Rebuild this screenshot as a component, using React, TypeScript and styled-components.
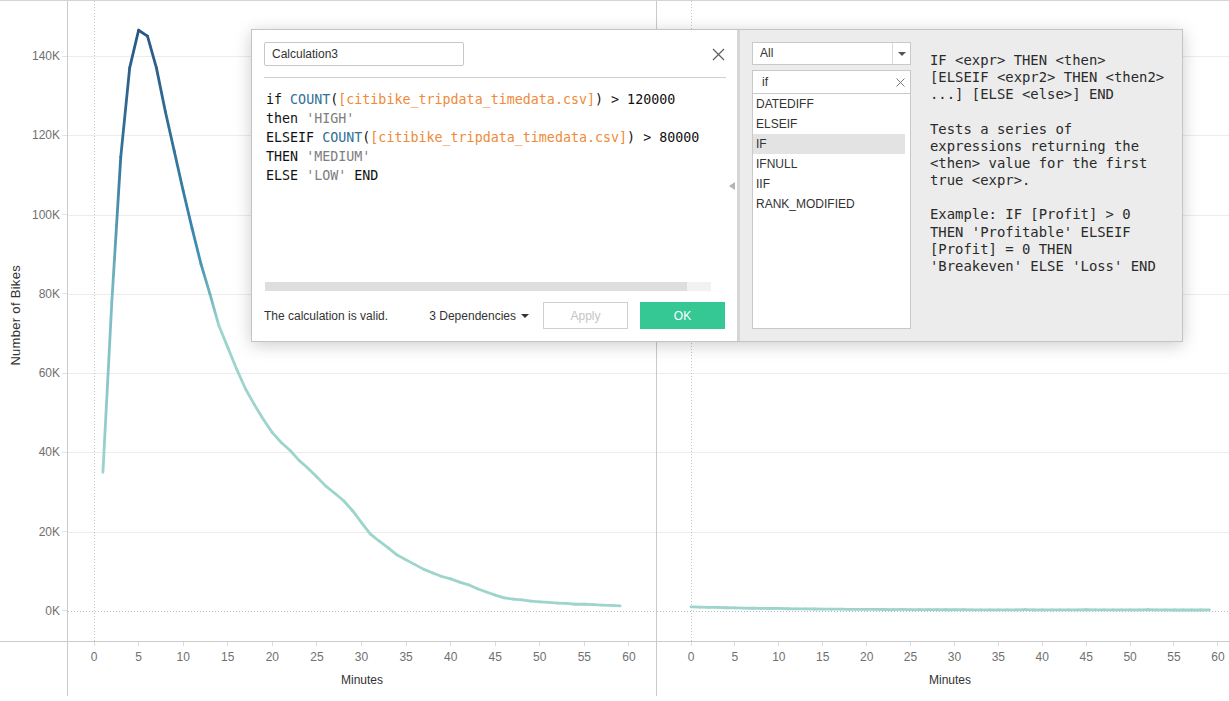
import React from "react";
import styled, { createGlobalStyle } from "styled-components";

const GlobalStyle = createGlobalStyle`
  *, *::before, *::after { box-sizing: border-box; }
  html, body { margin: 0; padding: 0; background: #fff; }
  body { font-family: "Liberation Sans", Arial, sans-serif; overflow: hidden; }
`;

const Page = styled.div`
  position: relative;
  width: 1229px;
  height: 701px;
  overflow: hidden;
  background: #fff;
`;

const Chart = styled.div`
  display: grid;
  grid-template-columns: 68px 589px 572px;
  grid-template-rows: 641px 54px;
  border-top: 1px solid #d4d4d4;
`;

const YAxisCell = styled.div`
  display: flex;
  border-right: 1px solid #cacaca;
  border-bottom: 1px solid #cacaca;
`;

const TitleCol = styled.div`
  width: 32px;
  padding-bottom: 12px;
  display: flex;
  align-items: center;
  justify-content: center;
`;

const AxisTitleV = styled.div`
  writing-mode: vertical-rl;
  transform: rotate(180deg);
  font-size: 13px;
  letter-spacing: 0.3px;
  color: #333;
  white-space: nowrap;
`;

const TickCol = styled.div`
  flex: 1;
  display: flex;
  flex-direction: column;
  align-items: flex-end;
  padding-top: 55px;
  gap: 79.286px;
`;

const YTick = styled.div`
  height: 0;
  display: flex;
  align-items: center;
`;

const YTickLabel = styled.span`
  font-size: 12px;
  line-height: 14px;
  color: #707070;
  white-space: nowrap;
`;

const YTickMark = styled.span`
  width: 5px;
  height: 1px;
  margin-left: 2px;
  background: #e3e3e3;
`;

const PlotCell = styled.div<{ $divider?: boolean }>`
  border-bottom: 1px solid #cacaca;
  border-right: ${(p) => (p.$divider ? "1px solid #cacaca" : "none")};
  svg { display: block; }
`;

const Corner = styled.div`
  border-right: 1px solid #cacaca;
`;

const XAxisCell = styled.div<{ $divider?: boolean }>`
  display: flex;
  flex-direction: column;
  border-right: ${(p) => (p.$divider ? "1px solid #cacaca" : "none")};
`;

const XTicks = styled.div<{ $start: number; $step: number }>`
  display: flex;
  height: 30px;
  padding-left: ${(p) => p.$start}px;
  gap: ${(p) => p.$step}px;
`;

const XTick = styled.div`
  width: 0;
  display: flex;
  flex-direction: column;
  align-items: center;
`;

const XTickMark = styled.span`
  flex-shrink: 0;
  width: 1px;
  height: 4px;
  background: #dcdcdc;
`;

const XTickLabel = styled.span`
  margin-top: 4px;
  font-size: 12px;
  line-height: 14px;
  color: #707070;
  white-space: nowrap;
`;

const XTitle = styled.div<{ $offset: number }>`
  font-size: 12px;
  line-height: 17px;
  color: #333;
  text-align: center;
  padding-left: ${(p) => p.$offset}px;
`;

/* ---------- Dialog ---------- */

const Dialog = styled.div`
  position: absolute;
  left: 251px;
  top: 29px;
  width: 932px;
  height: 313px;
  display: flex;
  background: #fff;
  border: 1px solid #c4c4c4;
  box-shadow: 0 3px 16px rgba(0, 0, 0, 0.2);
`;

const EditorPanel = styled.div`
  position: relative;
  width: 485px;
  padding: 12px 12px 12px 12px;
  display: flex;
  flex-direction: column;
  background: #fff;
`;

const Header = styled.div`
  height: 24px;
  display: flex;
  align-items: center;
  justify-content: space-between;
`;

const NameInput = styled.input`
  width: 200px;
  height: 24px;
  padding: 0 7px;
  border: 1px solid #c8c8c8;
  border-radius: 2px;
  font-family: "Liberation Sans", Arial, sans-serif;
  font-size: 12px;
  color: #333;
  outline: none;
  background: #fff;
`;

const CloseButton = styled.button`
  width: 14px;
  height: 14px;
  padding: 0;
  border: none;
  background: transparent;
  display: flex;
  align-items: center;
  justify-content: center;
`;

const Separator = styled.div`
  margin-top: 11px;
  margin-right: -1px;
  height: 1px;
  background: #cfcfcf;
`;

const Code = styled.div`
  flex: 1;
  padding: 12px 0 0 2px;
  font-family: "DejaVu Sans Mono", "Liberation Mono", monospace;
  font-size: 13.33px;
  line-height: 19px;
  color: #111;
`;

const CodeLine = styled.div`
  white-space: pre;
  height: 19px;
`;

const Fn = styled.span`
  color: #2f7097;
`;

const Field = styled.span`
  color: #f08a38;
`;

const Str = styled.span`
  color: #7e7e7e;
`;

const ScrollTrack = styled.div`
  margin-left: 1px;
  width: 446px;
  height: 9px;
  background: #f2f2f2;
  display: flex;
`;

const ScrollThumb = styled.div`
  width: 422px;
  background: #dedede;
`;

const Footer = styled.div`
  margin-top: 11px;
  height: 27px;
  display: flex;
  align-items: center;
`;

const Status = styled.div`
  flex: 1;
  font-size: 12px;
  color: #333;
`;

const Deps = styled.div`
  display: flex;
  align-items: center;
  gap: 5px;
  margin-right: 14px;
  font-size: 12px;
  color: #333;
`;

const Caret = styled.span<{ $color?: string }>`
  width: 0;
  height: 0;
  border-left: 4px solid transparent;
  border-right: 4px solid transparent;
  border-top: 4px solid ${(p) => p.$color || "#333"};
`;

const ApplyButton = styled.button`
  width: 85px;
  height: 27px;
  border: 1px solid #cfcfcf;
  background: #fff;
  color: #c4c4c4;
  font-family: "Liberation Sans", Arial, sans-serif;
  font-size: 12px;
  padding: 0;
`;

const OkButton = styled.button`
  width: 85px;
  height: 27px;
  margin-left: 12px;
  border: none;
  background: #35c895;
  color: #fff;
  font-family: "Liberation Sans", Arial, sans-serif;
  font-size: 12px;
  padding: 0;
`;

const CollapseArrow = styled.span`
  position: absolute;
  right: 2px;
  top: 152px;
  width: 0;
  height: 0;
  border-top: 4px solid transparent;
  border-bottom: 4px solid transparent;
  border-right: 6px solid #b3b3b3;
`;

const HelpPanel = styled.div`
  flex: 1;
  display: flex;
  gap: 19px;
  padding: 12px;
  background: #ececec;
  border-left: 3px solid #d6d6d6;
`;

const FunctionColumn = styled.div`
  width: 159px;
  display: flex;
  flex-direction: column;
`;

const Select = styled.div`
  height: 23px;
  display: flex;
  background: #fff;
  border: 1px solid #c9c9c9;
`;

const SelectText = styled.div`
  flex: 1;
  padding-left: 7px;
  font-size: 12px;
  line-height: 21px;
  color: #333;
`;

const SelectArrowBox = styled.div`
  width: 18px;
  border-left: 1px solid #dadada;
  display: flex;
  align-items: center;
  justify-content: center;
`;

const SearchList = styled.div`
  margin-top: 5px;
  flex: 1;
  display: flex;
  flex-direction: column;
  background: #fff;
  border: 1px solid #c9c9c9;
`;

const SearchRow = styled.div`
  height: 23px;
  flex-shrink: 0;
  display: flex;
  align-items: center;
  justify-content: space-between;
  padding: 0 5px 0 9px;
  border-bottom: 1px solid #c9c9c9;
  font-size: 12px;
  color: #333;
`;

const ListItem = styled.div<{ $active?: boolean }>`
  height: 20px;
  margin-right: 5px;
  padding-left: 3px;
  font-size: 12px;
  line-height: 20px;
  color: #333;
  background: ${(p) => (p.$active ? "#e3e3e3" : "transparent")};
`;

const Description = styled.pre`
  margin: 10px 0 0 0;
  font-family: "DejaVu Sans Mono", "Liberation Mono", monospace;
  font-size: 13.9px;
  line-height: 17.15px;
  color: #2a2a2a;
`;

/* ---------- Chart data ---------- */

const leftData = [
  35, 78, 114.5, 137, 146.5, 145, 137, 126, 116, 106, 96.5, 87.5, 80, 72, 66.5, 61, 56, 52, 48.3, 45,
  42.5, 40.5, 38, 36, 33.8, 31.5, 29.7, 27.8, 25.3, 22.3, 19.4, 17.6, 15.9, 14.1, 12.9, 11.7, 10.5,
  9.6, 8.7, 8.1, 7.3, 6.6, 5.6, 4.8, 4.0, 3.3, 3.0, 2.8, 2.5, 2.3, 2.2, 2.0, 1.9, 1.7, 1.7, 1.6, 1.5,
  1.4, 1.3,
];

const rightData = Array.from({ length: 60 }, (_, m) => 0.25 + 0.8 * Math.exp(-m / 12) + (m % 7 === 3 ? 0.05 : 0));

const hex = (h: string) => [1, 3, 5].map((i) => parseInt(h.slice(i, i + 2), 16));
const mix = (a: string, b: string, t: number) => {
  const A = hex(a);
  const B = hex(b);
  const c = A.map((v, i) => Math.round(v + (B[i] - v) * t));
  return `rgb(${c[0]},${c[1]},${c[2]})`;
};
const LIGHT = "#9dd4cc";
const MID = "#3a8cb1";
const DARK = "#2a5783";
const colorFor = (v: number) => {
  if (v <= 72) return LIGHT;
  if (v <= 90) return mix(LIGHT, MID, (v - 72) / 18);
  return mix(MID, DARK, Math.min(1, (v - 90) / 57));
};

const yFor = (vK: number) => 610 - (vK / 20) * 79.286;
const GRID = Array.from({ length: 8 }, (_, k) => Math.round(610 - k * 79.286) + 0.5);

type PlotProps = {
  id: string;
  width: number;
  x0: number;
  step: number;
  data: number[];
  startMin: number;
};

const Plot: React.FC<PlotProps> = ({ id, width, x0, step, data, startMin }) => {
  const pts = data.map((v, i) => ({ x: x0 + (i + startMin) * step, y: yFor(v), v }));
  const segs = pts.slice(1).map((p, i) => ({ a: pts[i], b: p }));
  return (
    <svg width={width} height={640} viewBox={`0 0 ${width} 640`}>
      {GRID.map((y, k) =>
        k === 0 ? (
          <line key={k} x1={0} x2={width} y1={y} y2={y} stroke="#bdbdbd" strokeWidth={1} strokeDasharray="1 2" />
        ) : (
          <line key={k} x1={0} x2={width} y1={y} y2={y} stroke="#ececec" strokeWidth={1} />
        )
      )}
      <line x1={x0 + 0.5} x2={x0 + 0.5} y1={0} y2={640} stroke="#c4c4c4" strokeWidth={1} strokeDasharray="1 2" />
      <defs>
        {segs.map((s, i) => (
          <linearGradient
            key={i}
            id={`${id}-g${i}`}
            gradientUnits="userSpaceOnUse"
            x1={s.a.x}
            y1={s.a.y}
            x2={s.b.x}
            y2={s.b.y}
          >
            <stop offset="0" stopColor={colorFor(s.a.v)} />
            <stop offset="1" stopColor={colorFor(s.b.v)} />
          </linearGradient>
        ))}
      </defs>
      {segs.map((s, i) => (
        <line
          key={i}
          x1={s.a.x}
          y1={s.a.y}
          x2={s.b.x}
          y2={s.b.y}
          stroke={`url(#${id}-g${i})`}
          strokeWidth={2.8}
          strokeLinecap="round"
        />
      ))}
    </svg>
  );
};

const Y_LABELS = ["140K", "120K", "100K", "80K", "60K", "40K", "20K", "0K"];
const X_LABELS = [0, 5, 10, 15, 20, 25, 30, 35, 40, 45, 50, 55, 60];
const FUNCTIONS = ["DATEDIFF", "ELSEIF", "IF", "IFNULL", "IIF", "RANK_MODIFIED"];

const DESCRIPTION = `IF <expr> THEN <then>
[ELSEIF <expr2> THEN <then2>
...] [ELSE <else>] END

Tests a series of
expressions returning the
<then> value for the first
true <expr>.

Example: IF [Profit] > 0
THEN 'Profitable' ELSEIF
[Profit] = 0 THEN
'Breakeven' ELSE 'Loss' END`;

const XAxis: React.FC<{ start: number; step: number; offset: number; divider?: boolean }> = ({
  start,
  step,
  offset,
  divider,
}) => (
  <XAxisCell $divider={divider}>
    <XTicks $start={start} $step={step}>
      {X_LABELS.map((l) => (
        <XTick key={l}>
          <XTickMark />
          <XTickLabel>{l}</XTickLabel>
        </XTick>
      ))}
    </XTicks>
    <XTitle $offset={offset}>Minutes</XTitle>
  </XAxisCell>
);

const FIELD = "[citibike_tripdata_timedata.csv]";

export default function App() {
  return (
    <Page>
      <GlobalStyle />
      <Chart>
        <YAxisCell>
          <TitleCol>
            <AxisTitleV>Number of Bikes</AxisTitleV>
          </TitleCol>
          <TickCol>
            {Y_LABELS.map((l) => (
              <YTick key={l}>
                <YTickLabel>{l}</YTickLabel>
                <YTickMark />
              </YTick>
            ))}
          </TickCol>
        </YAxisCell>
        <PlotCell $divider>
          <Plot id="left" width={588} x0={26} step={8.917} data={leftData} startMin={1} />
        </PlotCell>
        <PlotCell>
          <Plot id="right" width={572} x0={34} step={8.787} data={rightData} startMin={0} />
        </PlotCell>
        <Corner />
        <XAxis start={26} step={44.58} offset={0} divider />
        <XAxis start={34} step={43.92} offset={14} />
      </Chart>

      <Dialog>
        <EditorPanel>
          <Header>
            <NameInput defaultValue="Calculation3" readOnly />
            <CloseButton aria-label="Close">
              <svg width="13" height="13" viewBox="0 0 13 13">
                <path d="M1 1L12 12M12 1L1 12" stroke="#5e5e5e" strokeWidth="1.2" fill="none" />
              </svg>
            </CloseButton>
          </Header>
          <Separator />
          <Code>
            <CodeLine>
              if <Fn>COUNT</Fn>(<Field>{FIELD}</Field>) &gt; 120000
            </CodeLine>
            <CodeLine>
              then <Str>'HIGH'</Str>
            </CodeLine>
            <CodeLine>
              ELSEIF <Fn>COUNT</Fn>(<Field>{FIELD}</Field>) &gt; 80000
            </CodeLine>
            <CodeLine>
              THEN <Str>'MEDIUM'</Str>
            </CodeLine>
            <CodeLine>
              ELSE <Str>'LOW'</Str> END
            </CodeLine>
          </Code>
          <ScrollTrack>
            <ScrollThumb />
          </ScrollTrack>
          <Footer>
            <Status>The calculation is valid.</Status>
            <Deps>
              3 Dependencies
              <Caret />
            </Deps>
            <ApplyButton>Apply</ApplyButton>
            <OkButton>OK</OkButton>
          </Footer>
          <CollapseArrow />
        </EditorPanel>

        <HelpPanel>
          <FunctionColumn>
            <Select>
              <SelectText>All</SelectText>
              <SelectArrowBox>
                <Caret $color="#555" />
              </SelectArrowBox>
            </Select>
            <SearchList>
              <SearchRow>
                <span>if</span>
                <svg width="9" height="9" viewBox="0 0 9 9">
                  <path d="M0.5 0.5L8.5 8.5M8.5 0.5L0.5 8.5" stroke="#777" strokeWidth="1" fill="none" />
                </svg>
              </SearchRow>
              {FUNCTIONS.map((f) => (
                <ListItem key={f} $active={f === "IF"}>
                  {f}
                </ListItem>
              ))}
            </SearchList>
          </FunctionColumn>
          <Description>{DESCRIPTION}</Description>
        </HelpPanel>
      </Dialog>
    </Page>
  );
}
